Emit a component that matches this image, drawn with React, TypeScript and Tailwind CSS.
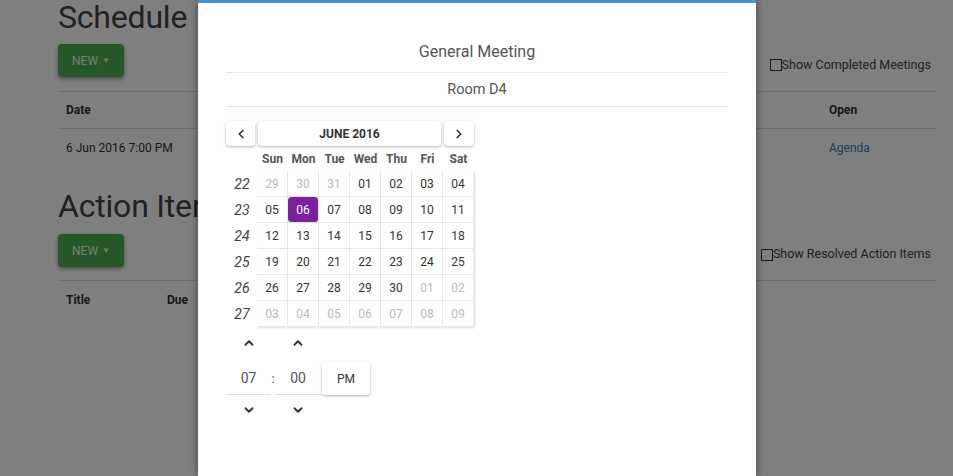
import React from "react";
import { ChevronLeft, ChevronRight, ChevronUp, ChevronDown } from "lucide-react";

const weeks = [
  { no: 22, days: ["29", "30", "31", "01", "02", "03", "04"], muted: [0, 1, 2] },
  { no: 23, days: ["05", "06", "07", "08", "09", "10", "11"], muted: [] },
  { no: 24, days: ["12", "13", "14", "15", "16", "17", "18"], muted: [] },
  { no: 25, days: ["19", "20", "21", "22", "23", "24", "25"], muted: [] },
  { no: 26, days: ["26", "27", "28", "29", "30", "01", "02"], muted: [5, 6] },
  { no: 27, days: ["03", "04", "05", "06", "07", "08", "09"], muted: [0, 1, 2, 3, 4, 5, 6] },
];

const dayNames = ["Sun", "Mon", "Tue", "Wed", "Thu", "Fri", "Sat"];

function NewButton() {
  return (
    <button className="flex items-center gap-1 h-[33px] w-[66px] justify-center rounded-sm bg-[#4caf50] text-white/90 text-[12px] shadow-[0_2px_4px_rgba(0,0,0,0.4)]">
      NEW
      <span className="text-[8px] leading-none">▼</span>
    </button>
  );
}

function Checkbox({ label }: { label: string }) {
  return (
    <label className="flex items-center text-[12.5px] text-[#444]">
      <span className="w-[12px] h-[12px] border border-[#333] bg-white inline-block" />
      {label}
    </label>
  );
}

function Background() {
  return (
    <div className="pl-[58px] pr-[17px] bg-white min-h-[476px] text-[#333]">
      <h1 className="mt-[-3px] text-[32px] leading-[40px] tracking-[-0.2px] text-[#444]">Schedule</h1>
      <div className="mt-[7px] flex items-center justify-between pr-[5px]">
        <NewButton />
        <div className="mt-[9px]">
          <Checkbox label="Show Completed Meetings" />
        </div>
      </div>
      <div className="mt-[14px] border-t border-[#ddd]">
        <div className="flex h-[37px] items-center border-b border-[#ddd] text-[12px] font-bold">
          <div className="pl-[8px] w-[763px]">Date</div>
          <div className="pl-[8px]">Open</div>
        </div>
        <div className="flex h-[37px] items-center text-[12px]">
          <div className="pl-[8px] w-[763px]">6 Jun 2016 7:00 PM</div>
          <div className="pl-[8px] text-[#337ab7]">Agenda</div>
        </div>
      </div>
      <h1 className="mt-[20px] text-[32px] leading-[40px] tracking-[-0.2px] text-[#444]">Action Items</h1>
      <div className="mt-[8px] flex items-center justify-between pr-[5px]">
        <NewButton />
        <div className="mt-[8px]">
          <Checkbox label="Show Resolved Action Items" />
        </div>
      </div>
      <div className="mt-[13px] border-t border-[#ddd]">
        <div className="flex h-[37px] items-center text-[12px] font-bold">
          <div className="pl-[8px] w-[101px]">Title</div>
          <div className="pl-[8px]">Due</div>
        </div>
      </div>
    </div>
  );
}

function Calendar() {
  return (
    <div className="w-[248px] text-[12px]">
      <div className="grid grid-cols-8 h-[25px]">
        <button className="mr-[2px] flex items-center justify-center bg-white rounded-sm shadow-[0_1px_3px_rgba(0,0,0,0.3)]">
          <ChevronLeft size={14} strokeWidth={3} className="text-[#333]" />
        </button>
        <button className="col-span-6 mx-[1px] mr-[2px] flex items-center justify-center bg-white rounded-sm font-bold text-[#333] shadow-[0_1px_3px_rgba(0,0,0,0.3)]">
          JUNE 2016
        </button>
        <button className="ml-[1px] flex items-center justify-center bg-white rounded-sm shadow-[0_1px_3px_rgba(0,0,0,0.3)]">
          <ChevronRight size={14} strokeWidth={3} className="text-[#333]" />
        </button>
      </div>
      <div className="grid grid-cols-8 h-[25px] items-center font-bold text-[#555]">
        <div />
        {dayNames.map((d) => (
          <div key={d} className="text-center">
            {d}
          </div>
        ))}
      </div>
      {weeks.map((w) => (
        <div key={w.no} className="grid grid-cols-8 h-[26px]">
          <div className="flex items-center justify-center pl-[1px] italic text-[14px] text-[#444]">{w.no}</div>
          {w.days.map((d, i) => {
            const selected = w.no === 23 && i === 1;
            const muted = w.muted.includes(i);
            return (
              <div
                key={i}
                className={`flex items-center justify-center border-r border-b border-[#e8e8e8] shadow-[1px_1px_2px_rgba(0,0,0,0.12)] ${
                  selected ? "bg-[#7b1fa2] text-white rounded-sm" : "bg-white"
                } ${muted ? "text-[#bbb]" : selected ? "" : "text-[#333]"}`}
              >
                {d}
              </div>
            );
          })}
        </div>
      ))}
    </div>
  );
}

function TimePicker() {
  return (
    <div className="mt-[4px] w-[144px] text-[#555]">
      <div className="flex h-[24px] items-center">
        <div className="w-[45px] flex justify-center">
          <ChevronUp size={14} strokeWidth={3.2} className="text-[#333]" />
        </div>
        <div className="w-[4px]" />
        <div className="w-[46px] flex justify-center">
          <ChevronUp size={14} strokeWidth={3.2} className="text-[#333]" />
        </div>
      </div>
      <div className="mt-[7px] flex items-center h-[33px]">
        <div className="w-[45px] h-full flex items-center justify-center border-b border-[#ddd] text-[14px]">07</div>
        <div className="w-[4px] text-center text-[13px]">:</div>
        <div className="w-[46px] h-full flex items-center justify-center border-b border-[#ddd] text-[14px]">00</div>
        <button className="ml-[1px] w-[48px] h-full bg-white rounded-sm text-[12px] text-[#333] shadow-[0_1px_3px_rgba(0,0,0,0.3)]">
          PM
        </button>
      </div>
      <div className="mt-[3px] flex h-[24px] items-center">
        <div className="w-[45px] flex justify-center">
          <ChevronDown size={14} strokeWidth={3.2} className="text-[#333]" />
        </div>
        <div className="w-[4px]" />
        <div className="w-[46px] flex justify-center">
          <ChevronDown size={14} strokeWidth={3.2} className="text-[#333]" />
        </div>
      </div>
    </div>
  );
}

export default function App() {
  return (
    <div className="relative h-[476px] w-[953px] overflow-hidden" style={{ fontFamily: "Roboto, 'Liberation Sans', sans-serif" }}>
      <Background />
      <div className="absolute inset-0 bg-black/50" />
      <div className="absolute top-0 bottom-0 left-[198px] w-[558px] bg-white border-t-[3px] border-[#4a90d9] shadow-[0_0_8px_rgba(0,0,0,0.5)]">
        <div className="px-[28px] pt-[37px]">
          <div className="h-[33px] pb-[8px] flex items-center justify-center border-b border-[#e5e5e5] text-[16px] text-[#555]">
            General Meeting
          </div>
          <div className="h-[34px] flex items-center justify-center border-b border-[#e5e5e5] text-[14.5px] text-[#555]">
            Room D4
          </div>
          <div className="mt-[14px]">
            <Calendar />
            <TimePicker />
          </div>
        </div>
      </div>
    </div>
  );
}
